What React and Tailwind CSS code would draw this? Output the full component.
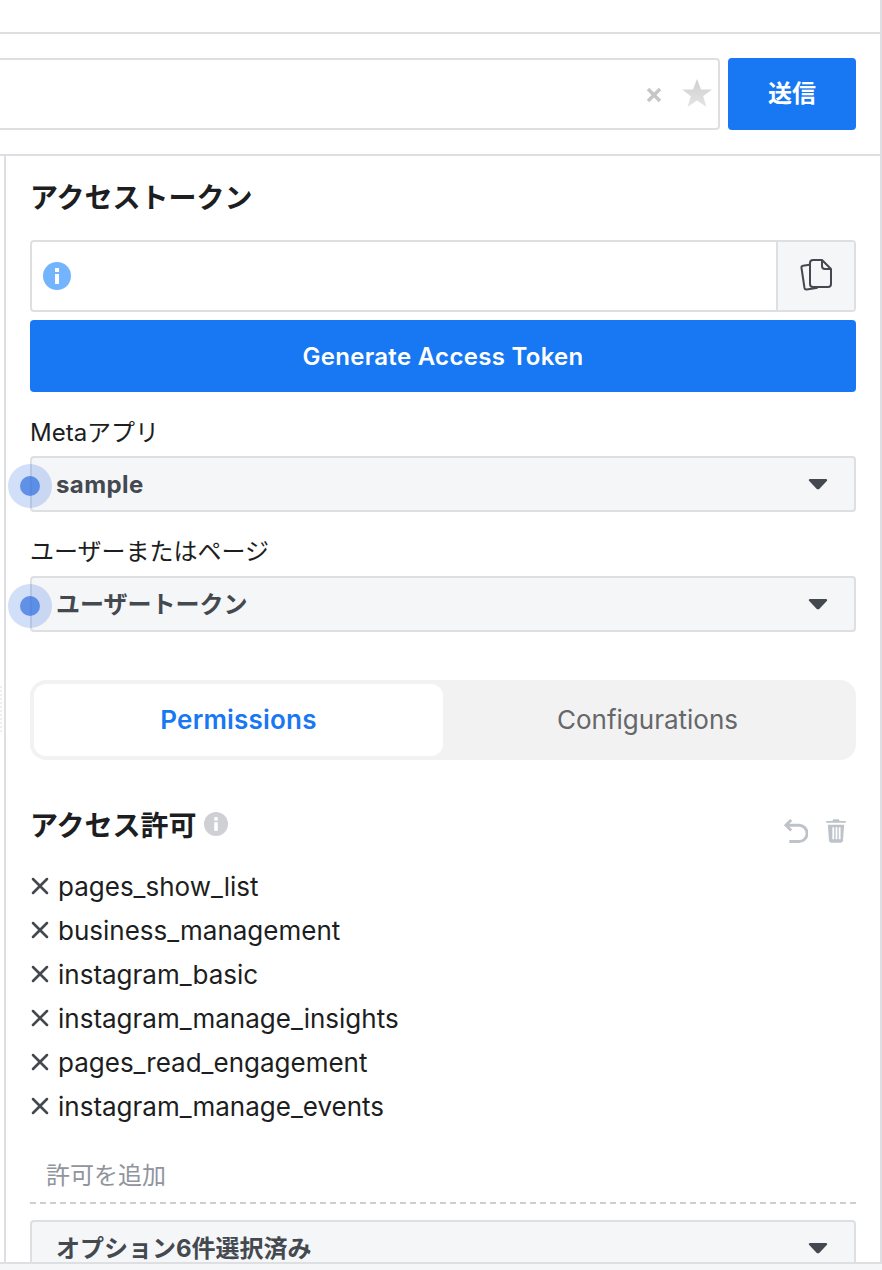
import { X } from 'lucide-react';

const permissions = [
  'pages_show_list',
  'business_management',
  'instagram_basic',
  'instagram_manage_insights',
  'pages_read_engagement',
  'instagram_manage_events',
];

const InfoIcon = ({ className, color }) => (
  <svg className={className} viewBox="0 0 28 28">
    <circle cx="14" cy="14" r="14" fill={color} />
    <rect x="12" y="12" width="4" height="10" fill="#fff" />
    <rect x="12" y="6" width="4" height="4" fill="#fff" />
  </svg>
);

const Caret = () => (
  <svg className="w-[20px] h-[12px]" viewBox="0 0 20 12">
    <path d="M2 1h16c1 0 1.500 1 1 1.700l-7.500 8c-.8.8-2.200.8-3 0l-7.500-8C.5 2 1 1 2 1z" fill="#444950" />
  </svg>
);

const Select = ({ label, dot, labelClass }) => (
  <div className="relative flex items-center justify-between h-[56px] bg-[#f5f6f7] border-2 border-[#dddfe2] rounded-[4px] pl-[24px] pr-[26px]">
    {dot && (
      <span className="absolute left-[-24px] top-[6px] w-[44px] h-[44px] rounded-full bg-[#1c5fe0]/20 flex items-center justify-center">
        <span className="w-[20px] h-[20px] rounded-full bg-[#2f6fe0]/70" />
      </span>
    )}
    <span className={`text-[24px] leading-[32px] mt-[2px] font-bold text-[#444950] ${labelClass || ''}`}>{label}</span>
    <Caret />
  </div>
);

export default function App() {
  return (
    <div className="relative w-[882px] h-[1270px] overflow-hidden bg-white flex flex-col text-[#1c1e21] font-['Inter','Noto_Sans_CJK_JP',sans-serif]">
      <span className="absolute left-0 top-[686px] h-[46px] border-l-2 border-dotted border-[#eeeeee]" />
      <div className="flex-1 min-h-0 flex flex-col border-r-2 border-[#dddfe2]">
        <div className="h-[34px] shrink-0 border-b-2 border-[#dddfe2]" />

        {/* Barra de consulta */}
        <div className="h-[122px] shrink-0 border-b-2 border-[#dddfe2] flex items-center gap-[8px] pr-[24px]">
          <div className="flex-1 ml-[-10px] h-[72px] bg-white border-2 border-[#dddfe2] rounded-[4px] flex items-center justify-end pr-[6px] gap-[20px]">
            <svg className="w-[16px] h-[16px] mt-[2px]" viewBox="0 0 16 16">
              <path d="M2 2l12 12M14 2L2 14" stroke="#c4c6c9" strokeWidth="3.500" />
            </svg>
            <svg className="w-[30px] h-[28px] mt-[-2px]" viewBox="0 0 30 28">
              <defs>
                <linearGradient id="star" x1="0" y1="0" x2="0" y2="1">
                  <stop offset="0" stopColor="#cfcfcf" />
                  <stop offset="1" stopColor="#e4e4e4" />
                </linearGradient>
              </defs>
              <path d="M15 0l4 10.500h11l-8.800 6.800L24.500 28 15 21.500 5.500 28l3.300-10.700L0 10.500h11z" fill="url(#star)" />
            </svg>
          </div>
          <button className="w-[128px] h-[72px] bg-[#1877f2] rounded-[4px] text-white text-[24px] font-bold">送信</button>
        </div>

        <div className="flex-1 min-h-0 ml-[4px] border-l-2 border-[#dddfe2] px-[24px] overflow-hidden">
          <h2 className="text-[28px] leading-[34px] font-bold mt-[25px]">アクセストークン</h2>

          {/* Token */}
          <div className="mt-[25px] h-[72px] flex border-2 border-[#dddfe2] rounded-[4px]">
            <div className="flex-1 flex items-center pl-[11px]">
              <InfoIcon className="w-[28px] h-[28px]" color="#73b4ff" />
            </div>
            <div className="w-[78px] bg-[#f5f6f7] border-l-2 border-[#dddfe2] flex items-center justify-center">
              <svg className="w-[34px] h-[34px]" viewBox="0 0 34 34" fill="none" stroke="#444950" strokeWidth="2" strokeLinejoin="round">
                <path d="M12 5.500l-8 1.300c-1 .2-1.700 1.100-1.500 2.200l3 20c.2 1 1.100 1.700 2.200 1.500l11-1.700" />
                <path d="M14 1h9l9 9v15c0 1.700-1.300 3-3 3H14c-1.700 0-3-1.300-3-3V4c0-1.700 1.300-3 3-3z" fill="#f5f6f7" />
                <path d="M23 1v6c0 1.700 1.300 3 3 3h6" />
              </svg>
            </div>
          </div>
          <button className="mt-[8px] w-full h-[72px] pt-[2px] bg-[#1877f2] rounded-[4px] text-white text-[24px] font-semibold tracking-[0.3px]">Generate Access Token</button>

          <div className="mt-[24px] text-[24px] leading-[32px] pt-[1px] h-[32px] mb-[8px]">Metaアプリ</div>
          <Select label="sample" dot labelClass="tracking-[0.4px]" />
          <div className="mt-[24px] text-[24px] leading-[32px] mb-[8px]">ユーザーまたはページ</div>
          <Select label="ユーザートークン" dot />

          {/* Tabs */}
          <div className="mt-[48px] h-[80px] bg-[#f2f2f2] rounded-[16px] p-[4px] flex">
            <div className="w-[409px] pb-[2px] bg-white rounded-[12px] flex items-center justify-center text-[26px] font-semibold tracking-[0.2px] text-[#1877f2]">Permissions</div>
            <div className="flex-1 pb-[2px] flex items-center justify-center text-[26px] text-[#65676b]">Configurations</div>
          </div>

          {/* Permisos */}
          <div className="mt-[47px] flex items-start justify-between">
            <div className="flex items-center gap-[7px]">
              <h3 className="text-[28px] leading-[38px] font-bold">アクセス許可</h3>
              <InfoIcon className="w-[24px] h-[24px] mt-[-4px]" color="#ced0d4" />
            </div>
            <div className="flex items-center gap-[18px] mt-[12px] mr-[10px]">
              <svg className="w-[24px] h-[24px]" viewBox="0 0 24 25" fill="none" stroke="#bec3c9" strokeWidth="3">
                <path d="M7 1L1.500 6.500 7 12" />
                <path d="M2 6.500h13a8.500 8.500 0 0 1 0 17H5" />
              </svg>
              <svg className="w-[20px] h-[24px]" viewBox="0 0 22 26" fill="#bec3c9">
                <path d="M8 0h6l1 2h6c.6 0 1 .4 1 1s-.4 1-1 1H1c-.6 0-1-.4-1-1s.4-1 1-1h6z" />
                <path fillRule="evenodd" d="M2 6h18l-1.300 17.500c-.1 1.400-1.200 2.500-2.700 2.500H6c-1.500 0-2.600-1.100-2.700-2.500zM7 9v13h2V9zm3.500 0v13h2V9zM14 9v13h2V9z" />
              </svg>
            </div>
          </div>

          <ul className="mt-[21px] flex flex-col gap-[4px]">
            {permissions.map((name) => (
              <li key={name} className="flex items-center h-[40px] text-[26px]">
                <X className="w-[28px] h-[28px] mr-[4px] ml-[-4px] text-[#444950]" strokeWidth={2.200} />
                {name}
              </li>
            ))}
          </ul>

          <div className="mt-[30px] h-[48px] border-b-2 border-dashed border-[#ccd0d5] pl-[16px] text-[24px] leading-[40px] text-[#90949c]">許可を追加</div>
          <div className="mt-[16px]">
            <Select label="オプション6件選択済み" />
          </div>
        </div>
      </div>
      <div className="h-[8px] shrink-0 bg-[#f5f6f7] border-t-2 border-[#dddfe2]" />
    </div>
  );
}
